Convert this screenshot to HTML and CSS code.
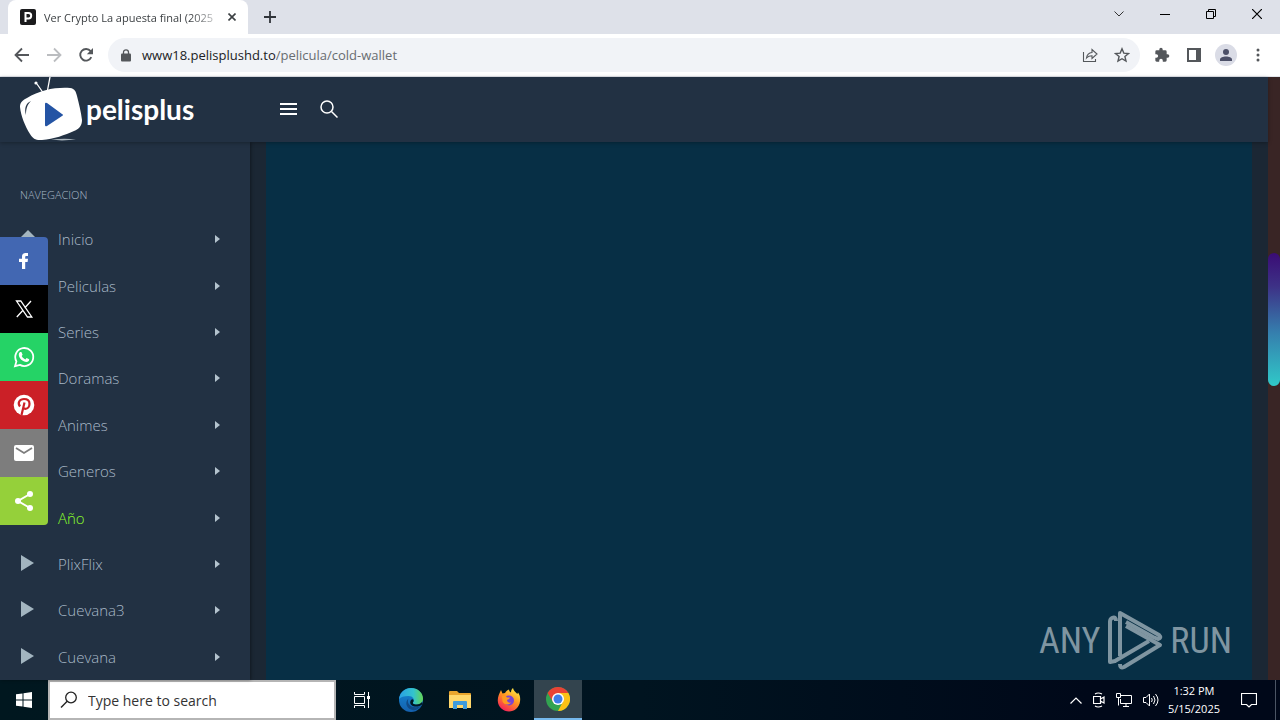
FILE: index.html
```html
<!DOCTYPE html>
<html lang="es">
<head>
    <meta charset="UTF-8"/>
    <meta name="viewport" content="width=device-width, initial-scale=1.0"/>
    <title>Ver Crypto La apuesta final (2025</title>

    <link rel="stylesheet" href="styles.css">
</head>
<body>

<!-- Browser tabs -->
<header class="tab-bar">
    <div class="tab">
        <svg class="favicon" viewBox="0 0 16 16"><rect width="16" height="16" rx="2" fill="#1b1b1d"/><path d="M5.500 13V4h3a2.700 2.700 0 0 1 0 5.400h-3" fill="none" stroke="#fff" stroke-width="2"/></svg>
        <span class="tab-title">Ver Crypto La apuesta final (2025</span>
        <button class="icon-btn tab-close" aria-label="Close tab"><svg width="8" height="8" viewBox="0 0 8 8"><path d="M.5.5l7 7M7.500.5l-7 7" stroke="#3c4043" stroke-width="1.600"/></svg></button>
    </div>
    <button class="icon-btn new-tab" aria-label="New tab"><svg width="12" height="12" viewBox="0 0 12 12"><path d="M6 0v12M0 6h12" stroke="#30343a" stroke-width="1.800"/></svg></button>
    <div class="window-buttons">
        <button class="icon-btn" aria-label="Search tabs"><svg width="10" height="6" viewBox="0 0 10 6"><path d="M.5.5L5 5 9.500.5" fill="none" stroke="#333"/></svg></button>
        <button class="icon-btn" aria-label="Minimize"><svg width="10" height="10" viewBox="0 0 10 10"><path d="M0 5.500h10" stroke="#000"/></svg></button>
        <button class="icon-btn" aria-label="Restore"><svg width="10" height="10" viewBox="0 0 10 10"><path d="M.5 2.500h7v7h-7zM2.500 2.500v-2h7v7h-2" fill="none" stroke="#000"/></svg></button>
        <button class="icon-btn" aria-label="Close"><svg width="10" height="10" viewBox="0 0 10 10"><path d="M0 0l10 10M10 0L0 10" stroke="#000" stroke-width="1.200"/></svg></button>
    </div>
</header>

<!-- Browser toolbar -->
<div class="toolbar">
    <div class="history">
        <button class="icon-btn" aria-label="Back"><svg width="16" height="16" viewBox="0 0 16 16"><path d="M15 8H2M8 1.500L1.500 8 8 14.500" fill="none" stroke="#54575b" stroke-width="1.800"/></svg></button>
        <button class="icon-btn" aria-label="Forward"><svg width="16" height="16" viewBox="0 0 16 16"><path d="M1 8h13M8 1.500L14.500 8 8 14.500" fill="none" stroke="#bbbdc0" stroke-width="1.800"/></svg></button>
        <button class="icon-btn" aria-label="Reload"><svg width="16" height="16" viewBox="0 0 16 16"><path d="M13.300 10.200A5.800 5.800 0 1 1 12.600 4.200" fill="none" stroke="#54575b" stroke-width="1.900"/><path d="M15 1v6.300H8.800z" fill="#54575b"/></svg></button>
    </div>
    <div class="address">
        <svg width="10" height="13" viewBox="0 0 10 13"><rect y="4.500" width="10" height="8" rx="1" fill="#54575b"/><path d="M2.500 5V3.300a2.500 2.500 0 0 1 5 0V5" fill="none" stroke="#54575b" stroke-width="1.300"/></svg>
        <label class="host" for="url">www18.pelisplushd.to</label>
        <input class="url" id="url" type="text" value="/pelicula/cold-wallet"/>
        <button class="icon-btn" aria-label="Share"><svg width="16" height="16" viewBox="0 0 16 16"><path d="M1.500 5v9.500h12V12M4.500 11c.5-3.500 2.500-5.300 5.500-5.500V2.500L15 7l-5 4.500V8.700c-2.500 0-4 .6-5.500 2.300z" fill="none" stroke="#54575b" stroke-width="1.100"/></svg></button>
        <button class="icon-btn" aria-label="Bookmark"><svg width="16" height="16" viewBox="0 0 16 16"><path d="M8 1.800l1.800 4.300 4.700.4-3.600 3 1.100 4.600L8 11.700l-4 2.400 1.100-4.600-3.600-3 4.700-.4z" fill="none" stroke="#54575b" stroke-width="1.400"/></svg></button>
    </div>
    <div class="extensions">
        <button class="icon-btn" aria-label="Extensions"><svg width="16" height="16" viewBox="0 0 24 24"><path d="M20.500 11H19V7a2 2 0 0 0-2-2h-4V3.500a2.500 2.500 0 0 0-5 0V5H4a2 2 0 0 0-2 2v3.800h1.500a2.700 2.700 0 0 1 0 5.400H2V20c0 1.100.9 2 2 2h3.800v-1.500a2.700 2.700 0 0 1 5.400 0V22H17a2 2 0 0 0 2-2v-4h1.500a2.500 2.500 0 0 0 0-5z" fill="#54575b"/></svg></button>
        <button class="icon-btn" aria-label="Side panel"><svg width="14" height="14" viewBox="0 0 14 14"><path d="M1 1h12v12H1z" fill="none" stroke="#54575b" stroke-width="2"/><path d="M9 1h4v12H9z" fill="#54575b"/></svg></button>
        <button class="icon-btn profile" aria-label="Profile"><svg width="14" height="14" viewBox="0 0 14 14"><circle cx="7" cy="4" r="3" fill="#4c5068"/><path d="M1 13v-1.500C1 9.500 4 8.500 7 8.500s6 1 6 3V13z" fill="#4c5068"/></svg></button>
        <button class="icon-btn" aria-label="Menu"><svg width="4" height="14" viewBox="0 0 4 14" fill="#54575b"><circle cx="2" cy="2" r="1.500"/><circle cx="2" cy="7" r="1.500"/><circle cx="2" cy="12" r="1.500"/></svg></button>
    </div>
</div>

<div class="viewport">
    <div class="page">
        <header class="site-header">
            <a class="logo" href="#">
                <svg width="64" height="64" viewBox="0 0 64 64">
                    <path d="M24 17L17 7M27 16L30 0" stroke="#fff" stroke-width="1.300"/>
                    <circle cx="16" cy="6" r="1.600" fill="#fff"/>
                    <path d="M7 21C20 13 36 10 50 11c5 .5 6 4 7 8 2 8 4 16 5 24 0 6-3 9-8 11-9 4-20 8-32 9-6 .5-9-1-12-6C5 49 1 39 0 30c0-5 3-7 7-9z" fill="#fff"/>
                    <path d="M11 24c-5 2-7 7-5 14 0-6 1-10 5-14z" fill="#233143"/>
                    <path d="M25 27v21q0 2 2 1l15-10q2-1 0-2L27 26q-2-1-2 1z" fill="#2454a4"/>
                    <path d="M31 62.500q14-1.500 25 0l-14 1z" fill="#aab5bd"/>
                </svg>
                <span class="logo-text">pelisplus</span>
            </a>
            <button class="icon-btn" aria-label="Toggle menu"><svg width="18" height="12" viewBox="0 0 18 12"><path d="M0 1h17M0 6h17M0 11h17" stroke="#fff" stroke-width="2"/></svg></button>
            <button class="icon-btn" aria-label="Buscar"><svg width="18" height="18" viewBox="0 0 18 18"><circle cx="7" cy="7" r="6" fill="none" stroke="#fff" stroke-width="1.500"/><path d="M11.500 11.500l6 6" stroke="#fff" stroke-width="1.500"/></svg></button>
        </header>

        <div class="columns">
            <nav class="sidebar">
                <h2 class="nav-title">NAVEGACION</h2>
                <ul class="nav-list">
                    <li><a href="#"><svg class="nav-icon" viewBox="0 0 16 18"><path d="M8 0l8 8h-2v8H2V8H0z"/></svg>Inicio</a></li>
                    <li><a href="#"><svg class="nav-icon" viewBox="0 0 16 18"><path d="M1 0l13 8-13 8z"/></svg>Peliculas</a></li>
                    <li><a href="#"><svg class="nav-icon" viewBox="0 0 16 18"><path d="M1 0l13 8-13 8z"/></svg>Series</a></li>
                    <li><a href="#"><svg class="nav-icon" viewBox="0 0 16 18"><path d="M1 0l13 8-13 8z"/></svg>Doramas</a></li>
                    <li><a href="#"><svg class="nav-icon" viewBox="0 0 16 18"><path d="M1 0l13 8-13 8z"/></svg>Animes</a></li>
                    <li><a href="#"><svg class="nav-icon" viewBox="0 0 16 18"><path d="M1 0l13 8-13 8z"/></svg>Generos</a></li>
                    <li><a class="active" href="#"><svg class="nav-icon" viewBox="0 0 16 18"><path d="M1 0l13 8-13 8z"/></svg>Año</a></li>
                    <li><a href="#"><svg class="nav-icon" viewBox="0 0 16 18"><path d="M1 0l13 8-13 8z"/></svg>PlixFlix</a></li>
                    <li><a href="#"><svg class="nav-icon" viewBox="0 0 16 18"><path d="M1 0l13 8-13 8z"/></svg>Cuevana3</a></li>
                    <li><a href="#"><svg class="nav-icon" viewBox="0 0 16 18"><path d="M1 0l13 8-13 8z"/></svg>Cuevana</a></li>
                </ul>
            </nav>
            <main class="content"></main>
        </div>

        <div class="share-bar">
            <a class="facebook" href="#" aria-label="Facebook"><svg viewBox="0 0 24 24"><path d="M10 20v-7H7v-3.200h3V7.500C10 5 11.500 4 13.500 4H16v3h-1.500c-1 0-1.300.4-1.300 1.200v1.600H16l-.4 3.200h-2.400v7z" fill="#fff"/></svg></a>
            <a class="x" href="#" aria-label="X"><svg viewBox="0 0 24 24"><path d="M4.500 4h4.300l11 16h-4.300zM19 4l-6.300 7M11 13.200L4.800 20" fill="none" stroke="#fff" stroke-width="1.300"/></svg></a>
            <a class="whatsapp" href="#" aria-label="WhatsApp"><svg viewBox="0 0 24 24"><path d="M3 21.200l1.400-4.800a9 9 0 1 1 3.500 3.500z" fill="none" stroke="#fff" stroke-width="1.800"/><path d="M8.200 7h1.200l1.200 2.700-.9 1.300c.9 1.700 2 2.700 3.700 3.400l1.200-1.400 2.600 1.300c0 1.800-1.200 2.700-2.700 2.700-3.600 0-7.700-4-7.700-7.300C6.800 8.500 7.300 7.500 8.200 7z" fill="#fff"/></svg></a>
            <a class="pinterest" href="#" aria-label="Pinterest"><svg viewBox="0 0 24 24"><circle cx="12" cy="12" r="10.300" fill="#fff"/><path d="M8 13.500C5 9.500 8 6 12 6c3.500 0 5.500 2 5.500 4.800 0 3-1.700 5-4 5-1.200 0-2-.6-2.300-1.300M12.500 9.500L9.500 22" fill="none" stroke="#cb2027" stroke-width="2.200"/></svg></a>
            <a class="email" href="#" aria-label="Email"><svg viewBox="0 0 24 24"><rect x="2" y="4" width="20" height="16" rx="2" fill="#fff"/><path d="M4 7l8 5 8-5" fill="none" stroke="#7d7d7d" stroke-width="1.800"/></svg></a>
            <a class="more" href="#" aria-label="Compartir"><svg viewBox="0 0 24 24"><path d="M18 5L6 12l12 7" fill="none" stroke="#fff" stroke-width="2"/><g fill="#fff"><circle cx="18" cy="5" r="3"/><circle cx="6" cy="12" r="3"/><circle cx="18" cy="19" r="3"/></g></svg></a>
        </div>
    </div>
    <div class="scrollbar"><div class="thumb"></div></div>

    <div class="watermark">
        <span>ANY</span>
        <svg width="56" height="62" viewBox="0 0 56 62"><g fill="none" stroke="#7f95a1" stroke-width="4" stroke-linejoin="round"><path d="M9 11q0-5-4-3-2 1-2 4v40l5-1 34-20"/><path d="M13 46V3l39 22q3 3-1 4l-5-2L19 12"/><path d="M19 16l34 19-36 22q-4 2-4-3"/></g></svg>
        <span>RUN</span>
    </div>
</div>

<!-- Windows taskbar -->
<footer class="taskbar">
    <button class="icon-btn task" aria-label="Start"><svg width="16" height="16" viewBox="0 0 16 16" fill="#fff"><path d="M0 2.300L6.500 1.400v6.100H0zM7.500 1.200L16 0v7.500H7.500zM0 8.500h6.500v6.100L0 13.700zM7.500 8.500H16V16l-8.500-1.200z"/></svg></button>
    <div class="search">
        <svg width="18" height="18" viewBox="0 0 18 18"><circle cx="11" cy="6.500" r="5.300" fill="none" stroke="#222" stroke-width="1.300"/><path d="M7.200 10.300L1 16.500" stroke="#222" stroke-width="1.400"/></svg>
        <input type="text" aria-label="Search" placeholder="Type here to search"/>
    </div>
    <button class="icon-btn task" aria-label="Task view"><svg width="16" height="16" viewBox="0 0 16 16"><path d="M.5 0v2.500h10V0M.5 16v-2.500h10V16M.5 4.500h10v7H.5zM14.500 0v16" fill="none" stroke="#fff"/><path d="M13 4h3v3h-3z" fill="#fff"/></svg></button>
    <button class="icon-btn task" aria-label="Edge"><svg width="24" height="24" viewBox="0 0 24 24">
        <defs>
            <linearGradient id="edge-top" x1="0" x2="1"><stop offset="0" stop-color="#299fe4"/><stop offset=".6" stop-color="#33c3ce"/><stop offset="1" stop-color="#65d553"/></linearGradient>
            <linearGradient id="edge-low" x2="0" y2="1"><stop offset="0" stop-color="#1487d4"/><stop offset="1" stop-color="#1460ae"/></linearGradient>
        </defs>
        <circle cx="12" cy="12" r="12" fill="url(#edge-low)"/>
        <path d="M0 11C1 4 6 0 12 0c7 0 12 5 12 10.500 0 4-3 6-6.500 6-3 0-4.500-1-3-3 1.200-2-.5-5.500-5-5.500C5 8 1.500 9 0 11z" fill="url(#edge-top)"/>
        <path d="M9.500 10.500c-2 4 1 9 7.500 8.800 2 0 4-.8 5.200-1.500-1.800 2.500-5 4.500-7.700 4.500C7 21 5.500 14 9.500 10.500z" fill="#104a87"/>
        <path d="M14.500 13.500c-1.500 2 0 3 3 3 2.500 0 4.500-1 5.500-2.500l.5 2c-2 2-5 2.800-7.500 2.500-4-.3-6-3.500-4-6.500 1.500-1.500 3-.5 2.500 1.500z" fill="#001722"/>
    </svg></button>
    <button class="icon-btn task" aria-label="File Explorer"><svg width="22" height="20" viewBox="0 0 22 20"><path d="M0 2q0-1 1-1h7l2 2h11q1 0 1 1v14H0z" fill="#e9a52d"/><path d="M0 5h22v13H0z" fill="#ffd76b"/><path d="M4 19v-7q0-1 1-1h12q1 0 1 1v7h-4v-4H8v4z" fill="#3e9bdc"/></svg></button>
    <button class="icon-btn task" aria-label="Firefox"><svg width="24" height="24" viewBox="0 0 24 24">
        <defs><linearGradient id="fox" x1=".8" x2=".2" y2="1"><stop offset="0" stop-color="#fff04a"/><stop offset=".45" stop-color="#ff9420"/><stop offset="1" stop-color="#f5155f"/></linearGradient></defs>
        <path d="M4 2l1.500 3.500L8 5c1-2 2.500-3 4-3.500C12 3 13 4 14 4.500 14 3 14.500 1 16 0c.5 3 3 4 4.300 6l.7-1.500C23 7 23.500 10 23 13.500 22.300 19.500 17.500 23.500 12 23.500S1 19 .8 13C.6 9 2 6 4 2z" fill="url(#fox)"/>
        <circle cx="12" cy="12.500" r="5" fill="#7844d4"/>
        <path d="M5 8c2-1 4 0 5 1.500h3c-.5 1.500-2 2-3 2.500 0 2 2 3 4 2.500-2 3-7 2.500-8.500-1z" fill="#ff9a1f"/>
    </svg></button>
    <button class="icon-btn task current" aria-label="Chrome"><svg width="24" height="24" viewBox="0 0 24 24"><circle cx="12" cy="12" r="12" fill="#32a350"/><path d="M1.600 6A12 12 0 0 1 22.400 6L12 7 7 15z" fill="#e94235"/><path d="M22.400 6A12 12 0 0 1 12 24l5-9.500L12 6z" fill="#fbc116"/><circle cx="12" cy="12" r="6" fill="#fff"/><circle cx="12" cy="12" r="4.500" fill="#3f7de8"/></svg></button>
    <div class="tray">
        <button class="icon-btn" aria-label="Show hidden icons"><svg width="12" height="7" viewBox="0 0 12 7"><path d="M.5 6.500L6 1l5.500 5.500" fill="none" stroke="#fff" stroke-width="1.200"/></svg></button>
        <button class="icon-btn" aria-label="Meet Now"><svg width="12" height="16" viewBox="0 0 12 16"><path d="M.5 4.500h7v7h-7zM7.500 7l3.500-2v6L7.500 9M2 2q3-2 7 0M2 14q3 2 7 0" fill="none" stroke="#fff" stroke-width="1.200"/></svg></button>
        <button class="icon-btn" aria-label="Network"><svg width="16" height="14" viewBox="0 0 16 14"><path d="M5 2.500h10.500v8H4.500V6M7 13.500h6M10 10.500v3M.5.500h4v4h-4zM2.500 4.500v8" fill="none" stroke="#fff"/></svg></button>
        <button class="icon-btn" aria-label="Volume"><svg width="16" height="14" viewBox="0 0 16 14"><path d="M.5 4.500H3L6.500 1v12L3 9.500H.5zM8.500 5q1.500 2 0 4M10.500 3q3 4 0 8M12.500 1q5 6 0 12" fill="none" stroke="#fff"/></svg></button>
    </div>
    <div class="clock">
        <span>1:32 PM</span>
        <span>5/15/2025</span>
    </div>
    <button class="icon-btn notifications" aria-label="Notifications"><svg width="16" height="16" viewBox="0 0 16 16"><path d="M.5 1.500h15v11h-5L8 15l-2.500-2.500h-5z" fill="none" stroke="#fff" stroke-width="1.200"/></svg></button>
</footer>

</body>
</html>
```
FILE: styles.css
```css
:root {
    --panel-color: #223143;
    --gutter-color: #1b2734;
    --content-color: #072f45;
    --nav-color: #a9b9c8;
}

* {
    margin: 0;
    padding: 0;
    box-sizing: border-box;
}

body {
    height: 100vh;
    display: flex;
    flex-direction: column;
    overflow: hidden;
    font-family: 'Open Sans', 'Noto Sans', sans-serif;
    font-size: 13px;
    background-color: var(--panel-color);
}

a {
    color: inherit;
    text-decoration: none;
}

input {
    border: none;
    outline: none;
    background: none;
    font-family: inherit;
    min-width: 0;
}

.icon-btn {
    display: flex;
    align-items: center;
    justify-content: center;
    border: none;
    background: none;
    cursor: pointer;
}

/* Browser */
.tab-bar {
    height: 34px;
    flex: none;
    display: flex;
    background-color: #dee1e9;
}

.tab {
    width: 240px;
    margin-left: 8px;
    padding: 0 8px 0 12px;
    display: flex;
    align-items: center;
    gap: 8px;
    background-color: #fff;
    border-radius: 8px 8px 0 0;
}

.favicon {
    width: 16px;
    height: 16px;
    flex: none;
}

.tab-title {
    flex: 1;
    white-space: nowrap;
    font-size: 11px;
    color: #3c4043;
    -webkit-mask-image: linear-gradient(to right, #000 85%, transparent 105%);
    mask-image: linear-gradient(to right, #000 85%, transparent 105%);
}

.tab-close {
    width: 16px;
    height: 16px;
}

.new-tab {
    width: 28px;
    margin-left: 8px;
}

.window-buttons {
    margin-left: auto;
    display: flex;
    padding-bottom: 6px;
}

.window-buttons .icon-btn {
    width: 46px;
}

.toolbar {
    height: 43px;
    flex: none;
    display: flex;
    align-items: center;
    background-color: #fff;
    border-bottom: 1px solid #e3e6ec;
}

.history {
    display: flex;
    gap: 16px;
    padding: 0 14px;
}

.address {
    flex: 1;
    height: 34px;
    display: flex;
    align-items: center;
    padding: 0 10px 0 13px;
    border-radius: 17px;
    background-color: #f1f3f7;
}

.host {
    margin-left: 11px;
    color: #202124;
}

.url {
    flex: 1;
    color: #686c70;
    font-size: 13px;
}

.address .icon-btn {
    margin-left: 16px;
}

.extensions {
    display: flex;
    align-items: center;
    gap: 17px;
    padding: 0 20px 0 14px;
}

.extensions .icon-btn {
    min-width: 4px;
}

.extensions .profile {
    width: 22px;
    height: 22px;
    margin-left: -3px;
    border-radius: 50%;
    background-color: #dadce6;
}

.extensions .profile + .icon-btn {
    margin-left: 2px;
}

/* Site */
.viewport {
    flex: 1;
    min-height: 0;
    display: flex;
    position: relative;
}

.page {
    flex: 1;
    display: flex;
    flex-direction: column;
    position: relative;
}

.site-header {
    height: 65px;
    flex: none;
    display: flex;
    align-items: center;
    gap: 22px;
    padding: 0 0 2px 20px;
    background-color: var(--panel-color);
    box-shadow: 0 1px 4px rgba(0, 0, 0, 0.3);
    z-index: 1;
}

.logo {
    width: 238px;
    display: flex;
    align-items: center;
    gap: 2px;
}

.logo-text {
    font-family: Lato, sans-serif;
    font-size: 28px;
    line-height: 32px;
    font-weight: 700;
    color: #fff;
}

.columns {
    flex: 1;
    min-height: 0;
    display: flex;
    background-color: var(--gutter-color);
}

.sidebar {
    width: 250px;
    display: flex;
    flex-direction: column;
    padding-top: 43px;
    background-color: var(--panel-color);
    box-shadow: 1px 0 3px rgba(0, 0, 0, 0.4);
    color: var(--nav-color);
}

.nav-title {
    padding: 0 20px;
    margin-bottom: 11px;
    font-size: 11px;
    line-height: 20px;
    font-weight: 300;
}

.nav-list {
    flex: 1;
    display: flex;
    flex-direction: column;
    list-style: none;
}

.nav-list li {
    flex: 1;
    display: flex;
}

.nav-list a {
    flex: 1;
    display: flex;
    align-items: center;
    padding: 0 30px 0 20px;
    font-size: 15px;
    font-weight: 300;
}

.nav-list a::after {
    content: '';
    margin-left: auto;
    border: 4px solid transparent;
    border-left: 5px solid #b4c3ce;
    border-right: none;
}

.nav-list .active {
    color: #8cff2a;
}

.nav-icon {
    width: 16px;
    height: 18px;
    margin-right: 22px;
    fill: #a3b5c0;
}

.content {
    flex: 1;
    margin: 0 16px;
    background-color: var(--content-color);
}

.share-bar {
    position: absolute;
    top: 160px;
    left: 0;
    z-index: 2;
    border-radius: 0 4px 4px 0;
    overflow: hidden;
}

.share-bar a {
    width: 48px;
    height: 48px;
    display: flex;
    align-items: center;
    justify-content: center;
}

.share-bar svg {
    width: 24px;
    height: 24px;
}

.facebook {
    background-color: #4267b2;
}

.x {
    background-color: #000;
}

.whatsapp {
    background-color: #25d366;
}

.pinterest {
    background-color: #cb2027;
}

.email {
    background-color: #7d7d7d;
}

.more {
    background-color: #95d03a;
}

.scrollbar {
    width: 12px;
    padding-top: 176px;
    background-color: #392525;
}

.thumb {
    height: 133px;
    border-radius: 6px;
    background: linear-gradient(#3a0c75, #3d3186 25%, #357fae 60%, #30c9c8);
}

.watermark {
    position: absolute;
    right: 48px;
    bottom: 8px;
    display: flex;
    align-items: center;
    gap: 7px;
    font-family: 'Liberation Sans Narrow', 'Roboto Condensed', 'Open Sans Condensed', Roboto, sans-serif;
    font-size: 36px;
    color: #7f95a1;
}

/* Taskbar */
.taskbar {
    height: 40px;
    flex: none;
    display: flex;
    background: linear-gradient(to right, #00171f, #001420 50%, #000819 85%);
    color: #fff;
}

.task {
    width: 48px;
    margin-right: 1px;
}

.task:first-child {
    margin-right: 0;
}

.current {
    background-color: #33444e;
    border-bottom: 2px solid #76b9ed;
}

.search {
    width: 288px;
    display: flex;
    align-items: center;
    gap: 10px;
    padding: 0 10px;
    margin-right: 2px;
    background-color: #fff;
    border: 2px solid #b5b5b5;
}

.search input {
    flex: 1;
    font-size: 14px;
}

.search input::placeholder {
    color: #333;
}

.tray {
    margin-left: auto;
    display: flex;
    gap: 11px;
}

.clock {
    display: flex;
    flex-direction: column;
    justify-content: center;
    align-items: center;
    padding: 0 8px 0 9px;
    font-size: 11px;
    line-height: 18px;
}

.notifications {
    width: 48px;
    padding-right: 6px;
    margin-right: 4px;
    border-right: 1px solid #4b5564;
}
```
